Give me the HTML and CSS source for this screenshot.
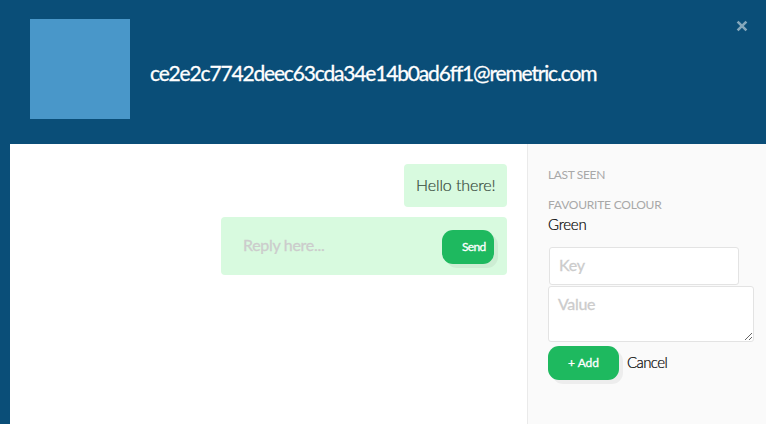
FILE: index.html
```html
<!DOCTYPE html>
<html lang="en">
<head>
<meta charset="utf-8">
<title>Conversation</title>
<link rel="stylesheet" href="styles.css">
</head>
<body>
<div class="panel">
  <header class="header">
    <div class="avatar"></div>
    <h1 class="title"><span>ce2e2c7742deec63cda34e14b0ad6ff1@remetric.com</span></h1>
    <button class="close" aria-label="Close"><svg width="12" height="12" viewBox="0 0 12 12"><path d="M1.6 1.6 10.4 10.4M10.4 1.6 1.6 10.4"/></svg></button>
  </header>
  <div class="content">
    <main class="chat">
      <div class="bubble"><span class="message">Hello there!</span></div>
      <form class="reply">
        <input class="reply-input" placeholder="Reply here...">
        <button class="button send" type="button"><span>Send</span></button>
      </form>
    </main>
    <aside class="sidebar">
      <div class="label last-seen"><span>LAST SEEN</span></div>
      <div class="label favourite"><span>FAVOURITE COLOUR</span></div>
      <div class="value"><span>Green</span></div>
      <input class="field key" placeholder="Key">
      <textarea class="field area" placeholder="Value"></textarea>
      <div class="actions">
        <button class="button add" type="button"><span>+ Add</span></button>
        <a class="cancel">Cancel</a>
      </div>
    </aside>
  </div>
</div>
</body>
</html>
```

FILE: styles.css
```css
* { box-sizing: border-box; }
body {
  margin: 0;
  background: #0a4e78;
  font-family: Lato, "Liberation Sans", sans-serif;
  overflow: hidden;
}
button, input, textarea { font: inherit; border: 0; margin: 0; outline: 0; }
.panel { height: 424px; display: flex; flex-direction: column; }
.header {
  height: 144px;
  padding: 19px 18px 0 30px;
  display: flex;
  align-items: flex-start;
}
.avatar { width: 100px; height: 100px; background: #4997c9; }
.title {
  flex: 1;
  margin: 40px 0 0 20px;
  color: #fff;
  font-size: 21px;
  line-height: 28px;
  font-weight: 400;
  letter-spacing: -1.17px;
  white-space: nowrap;
  -webkit-text-stroke: 0.3px #fff;
}
.close { background: none; padding: 0; height: 12px; margin-top: 1px; }
.close svg { display: block; stroke: #85a7bb; stroke-width: 2.6; }
.content { flex: 1; margin-left: 10px; display: flex; background: #fff; }
.chat {
  width: 517px;
  padding: 20px 20px 0 0;
  display: flex;
  flex-direction: column;
  align-items: flex-end;
  gap: 10px;
}
.bubble {
  width: 103px;
  height: 43px;
  padding: 0 12px;
  border-radius: 4px;
  background: #d8fadf;
  color: #35483a;
  font-size: 16px;
  font-weight: 300;
  line-height: 42px;
  letter-spacing: -0.1px;
  white-space: nowrap;
  -webkit-text-stroke: 0.2px #35483a;
}
.reply {
  width: 286px;
  height: 58px;
  padding: 13px 13px 0 22px;
  border-radius: 4px;
  background: #d8fadf;
  display: flex;
  justify-content: space-between;
}
.reply-input {
  width: 190px;
  height: 30px;
  padding: 0 0 2px;
  background: transparent;
  font-size: 16px;
  letter-spacing: -0.3px;
}
::placeholder { color: #ccc; opacity: 1; -webkit-text-stroke: 0.3px #ccc; }
.button {
  height: 34px;
  border-radius: 11px;
  background: #1eb95f;
  box-shadow: 4px 4px 0 rgba(0, 0, 0, 0.05);
  color: #fff;
  font-size: 12px;
  line-height: 34px;
  padding: 0 0 0 20px;
  text-align: left;
  letter-spacing: -0.65px;
  -webkit-text-stroke: 0.3px #fff;
}
.send { width: 52px; }
.sidebar {
  flex: 1;
  background: #fafafa;
  border-left: 1px solid #eaeaea;
  padding: 20px 12px 0 20px;
}
.label {
  height: 20px;
  color: #a8a8a8;
  font-size: 12px;
  line-height: 21px;
  letter-spacing: -0.35px;
  white-space: nowrap;
}
.favourite { letter-spacing: -0.22px; }
.last-seen { margin-bottom: 10px; }
.value {
  height: 20px;
  color: #000;
  font-size: 15px;
  font-weight: 300;
  line-height: 21px;
  letter-spacing: -0.25px;
  -webkit-text-stroke: 0.2px #000;
}
.field {
  display: block;
  background: #fff;
  border: 1px solid #e3e3e3;
  border-radius: 3px;
  padding: 7px 9px 9px;
  font-size: 16px;
  line-height: 20px;
  letter-spacing: -0.3px;
}
.key { width: 190px; height: 38px; margin: 13px 0 1px 1px; padding: 6px 9px 10px; }
.area { width: 206px; height: 56px; resize: both; overflow: hidden; }
.actions { display: flex; gap: 8px; margin-top: 4px; }
.add { width: 71px; letter-spacing: 0; }
.cancel {
  color: #000;
  font-size: 15px;
  font-weight: 300;
  line-height: 32px;
  letter-spacing: -0.6px;
  -webkit-text-stroke: 0.2px #000;
}
```
